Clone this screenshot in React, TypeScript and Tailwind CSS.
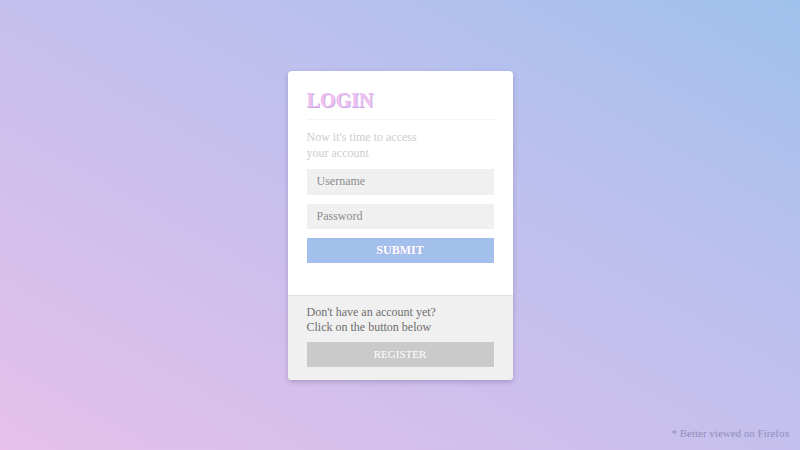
export default function App() {
    return (
        <div className="relative w-full h-[450px] overflow-hidden flex items-center justify-center bg-[linear-gradient(to_top_right,#e6c0ea_0%,#cbbfec_40%,#bcc0ee_65%,#a0c1ed_100%)] font-['Liberation_Serif',serif]">
            <div className="w-[225px] bg-white rounded-[4px] shadow-[0_2px_5px_rgba(80,60,120,0.3)] overflow-hidden">
                {/* Login part */}
                <div className="px-[19px] pt-[17px] pb-[32px]">
                    <h1 className="text-[20px] leading-[24px] font-bold text-[#efc2f2] [text-shadow:1px_1px_0_#c5a6e4]">LOGIN</h1>
                    <div className="h-px bg-[#f4f4f4] mt-[7px]"></div>
                    <p className="mt-[9px] text-[12px] leading-[16px] text-[#cdcdcd]">
                        Now it's time to access<br />your account
                    </p>
                    <div className="mt-[8px] flex flex-col gap-[9px]">
                        <input
                            type="text"
                            placeholder="Username"
                            className="w-full h-[26px] px-[10px] bg-[#f0f0f0] text-[12px] outline-none placeholder:text-[#8c8c8c]"
                        />
                        <input
                            type="password"
                            placeholder="Password"
                            className="w-full h-[25px] px-[10px] bg-[#f0f0f0] text-[12px] outline-none placeholder:text-[#8c8c8c]"
                        />
                        <button className="w-full h-[25px] bg-[#a3bfeb] text-white text-[12px] font-bold [text-shadow:0_0_1px_#b9a6e6]">
                            SUBMIT
                        </button>
                    </div>
                </div>
                {/* Register part */}
                <div className="border-t border-[#e2e2e2] bg-[#f0f0f0] px-[19px] pt-[9px] pb-[13px]">
                    <p className="text-[12px] leading-[15px] text-[#6e6e6e]">
                        Don't have an account yet?<br />Click on the button below
                    </p>
                    <button className="mt-[7px] w-full h-[25px] bg-[#cacaca] text-white text-[11px]">
                        REGISTER
                    </button>
                </div>
            </div>
            <p className="absolute right-[10px] bottom-[9px] text-[11px] text-[#9090bc]">* Better viewed on Firefox</p>
        </div>
    )
}
